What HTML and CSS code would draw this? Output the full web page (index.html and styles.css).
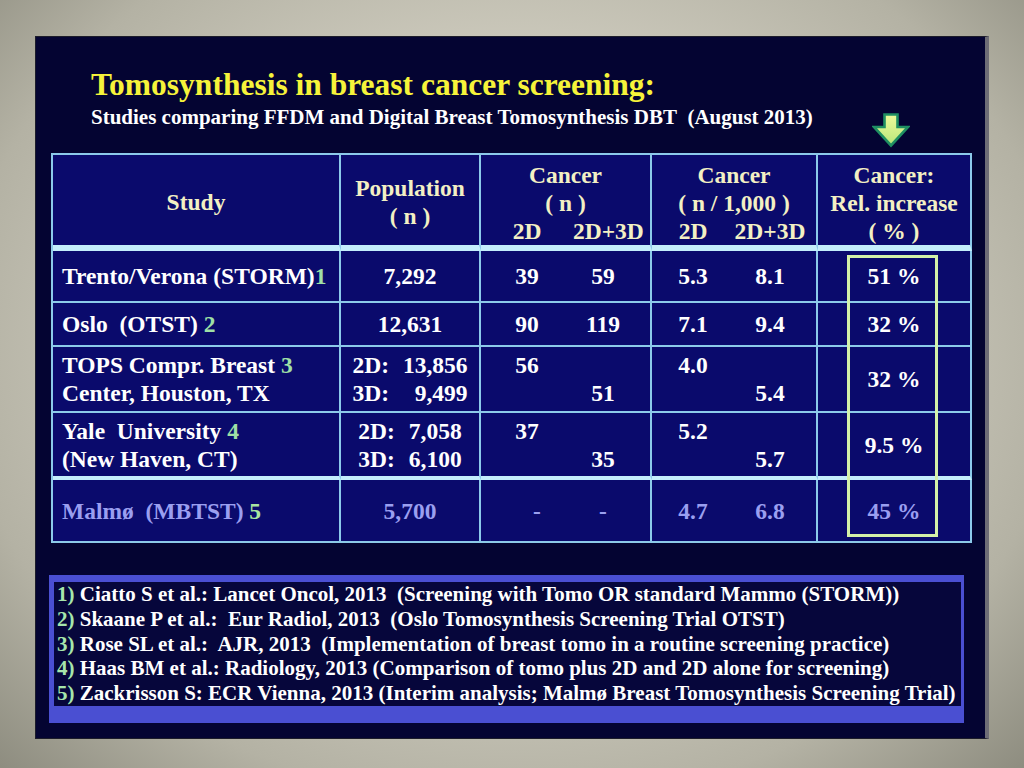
FILE: index.html
```html
<!DOCTYPE html>
<html lang="en">
<head>
<meta charset="utf-8">
<title>Tomosynthesis in breast cancer screening</title>
<link rel="stylesheet" href="styles.css">
</head>
<body>
<div class="slide">
  <svg class="arrow" width="38" height="35" viewBox="0 0 38 35" aria-hidden="true">
    <defs>
      <linearGradient id="ag" x1="0" y1="0" x2="0" y2="1">
        <stop offset="0" stop-color="#eefa9a"/>
        <stop offset="1" stop-color="#b6e67a"/>
      </linearGradient>
    </defs>
    <path d="M12.5,1.5 H25.5 V14 H36 L19,32.5 L2,14 H12.5 Z" fill="url(#ag)" stroke="#1f8f62" stroke-width="2.6" stroke-linejoin="miter"/>
  </svg>
  <h1 class="title">Tomosynthesis in breast cancer screening:</h1>
  <p class="subtitle">Studies comparing FFDM and Digital Breast Tomosynthesis DBT&nbsp; (August 2013)</p>

  <div class="table-wrap">
    <table class="data">
      <colgroup>
        <col class="c-study"><col class="c-pop"><col class="c-n"><col class="c-rate"><col class="c-inc">
      </colgroup>
      <thead>
        <tr class="head">
          <th class="study-h">Study</th>
          <th>Population<br>( n )</th>
          <th class="tri">Cancer<br>( n )<div class="pair pn"><span>2D</span><span>2D+3D</span></div></th>
          <th class="tri">Cancer<br>( n / 1,000 )<div class="pair pr"><span>2D</span><span>2D+3D</span></div></th>
          <th class="tri">Cancer:<br>Rel. increase<br>( % )</th>
        </tr>
      </thead>
      <tbody>
        <tr class="r1">
          <td class="study">Trento/Verona (STORM)<span class="ref">1</span></td>
          <td>7,292</td>
          <td><div class="pair pn"><span>39</span><span>59</span></div></td>
          <td><div class="pair pr"><span>5.3</span><span>8.1</span></div></td>
          <td>51 %</td>
        </tr>
        <tr class="r2">
          <td class="study">Oslo&nbsp; (OTST) <span class="ref">2</span></td>
          <td>12,631</td>
          <td><div class="pair pn"><span>90</span><span>119</span></div></td>
          <td><div class="pair pr"><span>7.1</span><span>9.4</span></div></td>
          <td>32 %</td>
        </tr>
        <tr class="r3">
          <td class="study">TOPS Compr. Breast <span class="ref">3</span><br>Center, Houston, TX</td>
          <td><div class="pop"><span>2D:</span><span>13,856</span><span>3D:</span><span>9,499</span></div></td>
          <td><div class="pair pn"><span>56</span><span></span><span></span><span>51</span></div></td>
          <td><div class="pair pr"><span>4.0</span><span></span><span></span><span>5.4</span></div></td>
          <td>32 %</td>
        </tr>
        <tr class="r4">
          <td class="study">Yale&nbsp; University <span class="ref">4</span><br>(New Haven, CT)</td>
          <td><div class="pop"><span>2D:</span><span>7,058</span><span>3D:</span><span>6,100</span></div></td>
          <td><div class="pair pn"><span>37</span><span></span><span></span><span>35</span></div></td>
          <td><div class="pair pr"><span>5.2</span><span></span><span></span><span>5.7</span></div></td>
          <td>9.5 %</td>
        </tr>
        <tr class="r5">
          <td class="study">Malmø&nbsp; (MBTST) <span class="ref">5</span></td>
          <td>5,700</td>
          <td><div class="pair pn"><span class="dash">-</span><span>-</span></div></td>
          <td><div class="pair pr"><span>4.7</span><span>6.8</span></div></td>
          <td>45 %</td>
        </tr>
      </tbody>
    </table>
    <div class="highlight"></div>
  </div>

  <div class="refs">
    <div class="refs-inner">
      <div class="ref-lines">
        <p><span class="num">1)</span> Ciatto S et al.: Lancet Oncol, 2013&nbsp; (Screening with Tomo OR standard Mammo (STORM))</p>
        <p><span class="num">2)</span> Skaane P et al.:&nbsp; Eur Radiol, 2013&nbsp; (Oslo Tomosynthesis Screening Trial OTST)</p>
        <p><span class="num">3)</span> Rose SL et al.:&nbsp; AJR, 2013&nbsp; (Implementation of breast tomo in a routine screening practice)</p>
        <p><span class="num">4)</span> Haas BM et al.: Radiology, 2013 (Comparison of tomo plus 2D and 2D alone for screening)</p>
        <p><span class="num">5)</span> Zackrisson S: ECR Vienna, 2013 (Interim analysis; Malmø Breast Tomosynthesis Screening Trial)</p>
      </div>
    </div>
  </div>
</div>
</body>
</html>
```

FILE: styles.css
```css
* { box-sizing: border-box; }
html, body { margin: 0; padding: 0; }

body {
  width: 1024px;
  height: 768px;
  overflow: hidden;
  padding: 36px 0 0 35px;
  background: radial-gradient(ellipse 72% 80% at 50% 45%, #dcd9ce 0%, #d2cfc2 40%, #b4b2a4 75%, #8a897c 100%);
  font-family: "Liberation Serif", "Times New Roman", serif;
  font-weight: bold;
}

.slide {
  position: relative;
  width: 954px;
  height: 703px;
  background: #040432;
  border: 1px solid #1c1c2a;
  border-right: 4px solid #6e6d76;
}

.arrow {
  position: absolute;
  left: 836px;
  top: 76px;
}

.title {
  margin: 31px 0 0 55px;
  font-size: 31.5px;
  line-height: 34px;
  font-weight: bold;
  color: #f6f33a;
}

.subtitle {
  margin: 3px 0 0 55px;
  font-size: 21px;
  line-height: 24px;
  color: #ffffff;
}

.table-wrap {
  position: relative;
  width: 921px;
  margin: 24px 0 0 15px;
}

table.data {
  width: 921px;
  table-layout: fixed;
  border-collapse: separate;
  border-spacing: 0;
  background: #0a0a6c;
  border-left: 2px solid #8ccaea;
  border-top: 2px solid #8ccaea;
  font-size: 23.5px;
  color: #ffffff;
}

.c-study { width: 288px; }
.c-pop { width: 140px; }
.c-n { width: 171px; }
.c-rate { width: 166px; }
.c-inc { width: 154px; }

.data th,
.data td {
  padding: 0;
  border-right: 2px solid #8ccaea;
  border-bottom: 2px solid #8ccaea;
  text-align: center;
  vertical-align: middle;
  line-height: 28px;
  font-weight: bold;
}

.data th {
  color: #f3f0c4;
  line-height: 28.5px;
  padding-top: 4px;
}

.data th.tri {
  line-height: 28px;
  padding-top: 6px;
}

.head { height: 96px; }
.head th { border-bottom: 6px solid #c4eefb; }
.r1 { height: 52px; }
.r2 { height: 44px; }
.r3 { height: 66px; }
.r4 { height: 67px; }
.r4 td { border-bottom: 4px solid #c4eefb; }
.r5 { height: 63px; }
.r5 td { color: #9a9ff0; }

.data td.study {
  text-align: left;
  padding-left: 9px;
}

.ref { color: #9fe0a6; }
.r5 .ref { color: #a9e6a0; }

.pair {
  display: grid;
  text-align: center;
}
.pair.pn { grid-template-columns: 92px 60px; }
.pair.pr { grid-template-columns: 82px 72px; }
.pair .dash { padding-left: 20px; }

.pop {
  display: inline-grid;
  grid-template-columns: auto auto;
  column-gap: 14px;
}
.pop span:nth-child(even) { text-align: right; }

.highlight {
  position: absolute;
  left: 796px;
  top: 102px;
  width: 91px;
  height: 282px;
  border: 3px solid #d4f1a8;
  pointer-events: none;
}

.refs {
  width: 915px;
  height: 148px;
  margin: 32px 0 0 13px;
  padding: 12px 3px 12px 5px;
  background: #4a4fd2;
}

.refs-inner {
  height: 100%;
  background: #06063b;
  padding-left: 3px;
}

.ref-lines {
  margin-top: -5px;
  font-size: 21px;
  line-height: 24.75px;
  color: #ffffff;
  white-space: nowrap;
}

.ref-lines p { margin: 0; }
.num { color: #a6e6ac; }
```
